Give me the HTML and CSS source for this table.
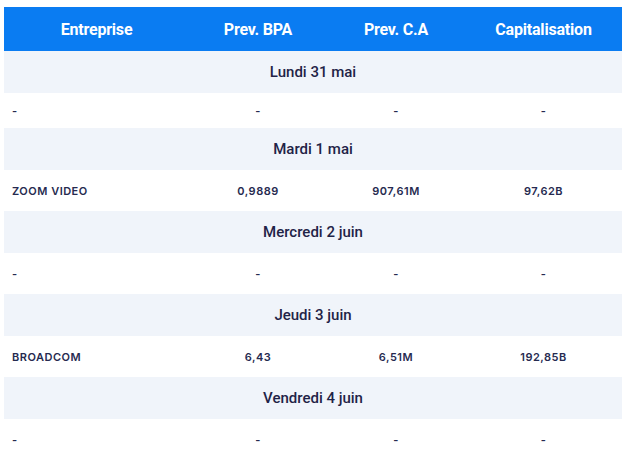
FILE: index.html
```html
<!DOCTYPE html>
<html lang="fr">
<head>
<meta charset="utf-8">
<title>Agenda des résultats</title>
<link rel="stylesheet" href="styles.css">
</head>
<body>
<table class="agenda">
  <colgroup>
    <col class="c1"><col class="c2"><col class="c3"><col class="c4">
  </colgroup>
  <thead>
    <tr class="head">
      <th>Entreprise</th><th>Prev. BPA</th><th>Prev. C.A</th><th>Capitalisation</th>
    </tr>
  </thead>
  <tbody>
    <tr class="day"><td colspan="4">Lundi 31 mai</td></tr>
    <tr class="row short"><td>-</td><td>-</td><td>-</td><td>-</td></tr>
    <tr class="day"><td colspan="4">Mardi 1 mai</td></tr>
    <tr class="row"><td>ZOOM VIDEO</td><td>0,9889</td><td>907,61M</td><td>97,62B</td></tr>
    <tr class="day"><td colspan="4">Mercredi 2 juin</td></tr>
    <tr class="row"><td>-</td><td>-</td><td>-</td><td>-</td></tr>
    <tr class="day"><td colspan="4">Jeudi 3 juin</td></tr>
    <tr class="row"><td>BROADCOM</td><td>6,43</td><td>6,51M</td><td>192,85B</td></tr>
    <tr class="day"><td colspan="4">Vendredi 4 juin</td></tr>
    <tr class="row"><td>-</td><td>-</td><td>-</td><td>-</td></tr>
  </tbody>
</table>
</body>
</html>
```

FILE: styles.css
```css
html, body {
  margin: 0;
  padding: 0;
  background: #ffffff;
}
body {
  padding: 7px 7px 0 4px;
  font-family: Roboto, "Liberation Sans", sans-serif;
}
.agenda {
  width: 618px;
  border-collapse: collapse;
  table-layout: fixed;
}
.c1 { width: 185px; }
.c2 { width: 138px; }
.c3 { width: 138px; }
.c4 { width: 157px; }

.head th {
  background: #0a7cf2;
  color: #ffffff;
  font-weight: 700;
  font-size: 16px;
  letter-spacing: -0.2px;
  height: 44px;
  padding: 0;
  text-align: center;
  vertical-align: middle;
}
.day td {
  background: #f0f4fa;
  color: #1f2347;
  font-weight: 500;
  font-size: 15px;
  height: 42px;
  padding: 0;
  text-align: center;
  vertical-align: middle;
}
.row td {
  background: #ffffff;
  color: #262a50;
  font-family: Inter, Roboto, sans-serif;
  font-weight: 600;
  font-size: 11px;
  letter-spacing: 0.5px;
  height: 41px;
  padding: 0;
  text-align: center;
  vertical-align: middle;
}
.row td:first-child {
  text-align: left;
  padding-left: 8px;
}
.row.short td {
  height: 35px;
}
```
